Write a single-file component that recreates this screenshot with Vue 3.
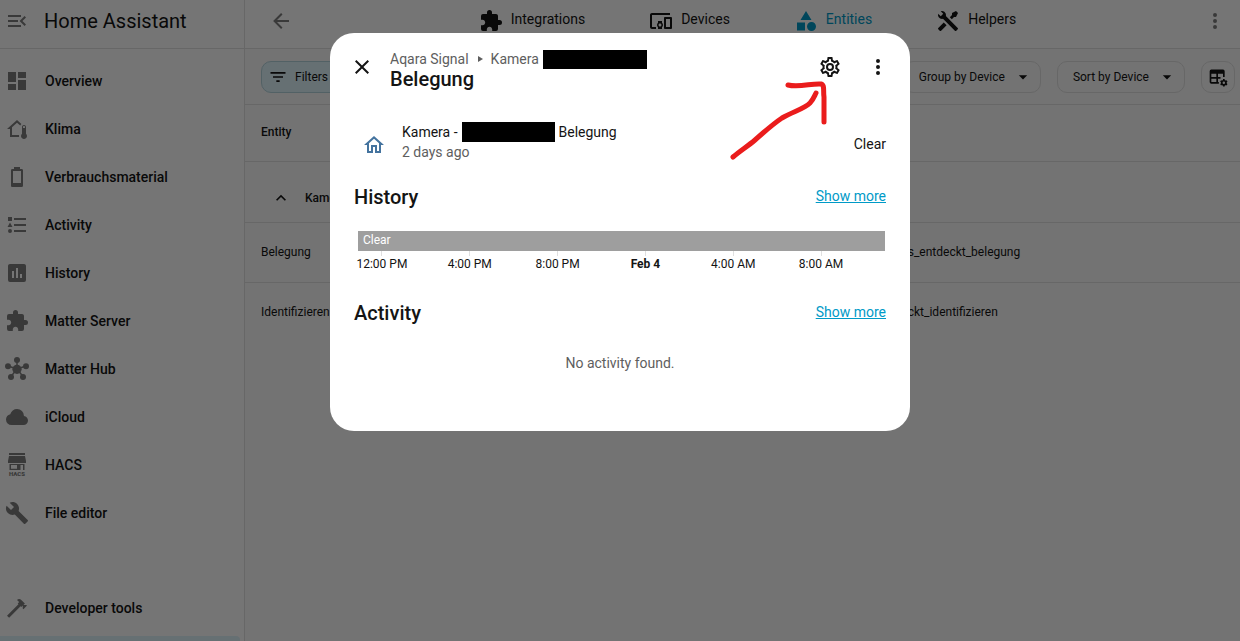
<script setup>
const icons = {
  menu: 'M21,15.61L19.59,17L14.58,12L19.59,7L21,8.39L17.44,12L21,15.61M3,6H16V8H3V6M3,13V11H13V13H3M3,18V16H16V18H3Z',
  dashboard: 'M13,3V9H21V3M13,21H21V11H13M3,21H11V15H3M3,13H11V3H3V13Z',
  climate: 'M19 8C20.11 8 21 8.9 21 10V16.76C21.61 17.31 22 18.11 22 19C22 20.66 20.66 22 19 22C17.34 22 16 20.66 16 19C16 18.11 16.39 17.31 17 16.76V10C17 8.9 17.9 8 19 8M19 9C18.45 9 18 9.45 18 10V11H20V10C20 9.45 19.55 9 19 9M12 5.69L7 10.19V18H14.1L14 19L14.1 20H5V12H2L12 3L16.4 6.96C15.89 7.4 15.5 7.97 15.25 8.61L12 5.69Z',
  battery: 'M16,18H8V6H16M16.67,4H15V2H9V4H7.33A1.33,1.33 0 0,0 6,5.33V20.67C6,21.4 6.6,22 7.33,22H16.67A1.33,1.33 0 0,0 18,20.67V5.33C18,4.6 17.4,4 16.67,4Z',
  list: 'M5,9.5L7.5,14H2.5L5,9.5M3,4H7V8H3V4M5,20A2,2 0 0,0 7,18A2,2 0 0,0 5,16A2,2 0 0,0 3,18A2,2 0 0,0 5,20M9,5V7H21V5H9M9,19H21V17H9V19M9,13H21V11H9V13Z',
  chart: 'M9 17H7V10H9V17M13 17H11V7H13V17M17 17H15V13H17V17M19 3H5C3.89 3 3 3.89 3 5V19A2 2 0 0 0 5 21H19A2 2 0 0 0 21 19V5C21 3.89 20.1 3 19 3Z',
  puzzle: 'M20.5,11H19V7C19,5.89 18.1,5 17,5H13V3.5A2.5,2.5 0 0,0 10.5,1A2.5,2.5 0 0,0 8,3.5V5H4A2,2 0 0,0 2,7V10.8H3.5C5,10.8 6.2,12 6.2,13.5C6.2,15 5,16.2 3.5,16.2H2V20A2,2 0 0,0 4,22H7.8V20.5C7.8,19 9,17.8 10.5,17.8C12,17.8 13.2,19 13.2,20.5V22H17A2,2 0 0,0 19,20V16H20.5A2.5,2.5 0 0,0 23,13.5A2.5,2.5 0 0,0 20.5,11Z',
  cloud: 'M6.5 20Q4.22 20 2.61 18.43 1 16.85 1 14.58 1 12.63 2.17 11.1 3.35 9.57 5.25 9.15 5.88 6.85 7.75 5.43 9.63 4 12 4 14.93 4 16.96 6.04 19 8.07 19 11 20.73 11.2 21.86 12.5 23 13.78 23 15.5 23 17.38 21.69 18.69 20.38 20 18.5 20Z',
  wrench: 'M22.7,19L13.6,9.9C14.5,7.6 14,4.9 12.1,3C10.1,1 7.1,0.6 4.7,1.7L9,6L6,9L1.6,4.7C0.4,7.1 0.9,10.1 2.9,12.1C4.8,14 7.5,14.5 9.8,13.6L18.9,22.7C19.3,23.1 19.9,23.1 20.3,22.7L22.6,20.4C23.1,20 23.1,19.3 22.7,19Z',
  hammer: 'M2,19.63L13.43,8.2L12.72,7.5L14.14,6.07L12,3.89C13.2,2.7 15.09,2.7 16.27,3.89L19.87,7.5L18.45,8.91H21.29L22,9.62L18.45,13.21L17.74,12.5V9.62L16.27,11.04L15.56,10.33L4.13,21.76L2,19.63Z',
  back: 'M20,11V13H8L13.5,18.5L12.08,19.92L4.16,12L12.08,4.08L13.5,5.5L8,11H20Z',
  devices: 'M3 6H21V4H3C1.9 4 1 4.9 1 6V18C1 19.1 1.9 20 3 20H7V18H3V6M13 12H9V13.78C8.39 14.33 8 15.11 8 16C8 16.89 8.39 17.67 9 18.22V20H13V18.22C13.61 17.67 14 16.88 14 16S13.61 14.33 13 13.78V12M11 17.5C10.17 17.5 9.5 16.83 9.5 16S10.17 14.5 11 14.5 12.5 15.17 12.5 16 11.83 17.5 11 17.5M22 8H16C15.5 8 15 8.5 15 9V19C15 19.5 15.5 20 16 20H22C22.5 20 23 19.5 23 19V9C23 8.5 22.5 8 22 8M21 18H17V10H21V18Z',
  shape: 'M11,13.5V21.5H3V13.5H11M12,2L17.5,11H6.5L12,2M17.5,13C20,13 22,15 22,17.5C22,20 20,22 17.5,22C15,22 13,20 13,17.5C13,15 15,13 17.5,13Z',
  tools: 'M21.71 20.29L20.29 21.71A1 1 0 0 1 18.88 21.71L7 9.85A3.81 3.81 0 0 1 6 10A4 4 0 0 1 2.22 4.7L4.76 7.24L5.29 6.71L6.71 5.29L7.24 4.76L4.7 2.22A4 4 0 0 1 10 6A3.81 3.81 0 0 1 9.85 7L21.71 18.88A1 1 0 0 1 21.71 20.29M2.29 18.88A1 1 0 0 0 2.29 20.29L3.71 21.71A1 1 0 0 0 5.12 21.71L10.59 16.25L7.76 13.42M20 2L16 4V6L13.83 8.17L15.83 10.17L18 8H20L22 4Z',
  dots: 'M12,16A2,2 0 0,1 14,18A2,2 0 0,1 12,20A2,2 0 0,1 10,18A2,2 0 0,1 12,16M12,10A2,2 0 0,1 14,12A2,2 0 0,1 12,14A2,2 0 0,1 10,12A2,2 0 0,1 12,10M12,4A2,2 0 0,1 14,6A2,2 0 0,1 12,8A2,2 0 0,1 10,6A2,2 0 0,1 12,4Z',
  filter: 'M6,13H18V11H6M3,6V8H21V6M10,18H14V16H10V18Z',
  down: 'M7,10L12,15L17,10H7Z',
  up: 'M7.41,15.41L12,10.83L16.59,15.41L18,14L12,8L6,14L7.41,15.41Z',
  close: 'M19,6.41L17.59,5L12,10.59L6.41,5L5,6.41L10.59,12L5,17.59L6.41,19L12,13.41L17.59,19L19,17.59L13.41,12L19,6.41Z',
  cog: 'M12,8A4,4 0 0,1 16,12A4,4 0 0,1 12,16A4,4 0 0,1 8,12A4,4 0 0,1 12,8M12,10A2,2 0 0,0 10,12A2,2 0 0,0 12,14A2,2 0 0,0 14,12A2,2 0 0,0 12,10M10,22C9.75,22 9.54,21.82 9.5,21.58L9.13,18.93C8.5,18.68 7.96,18.34 7.44,17.94L4.95,18.95C4.73,19.03 4.46,18.95 4.34,18.73L2.34,15.27C2.21,15.05 2.27,14.78 2.46,14.63L4.57,12.97L4.5,12L4.57,11L2.46,9.37C2.27,9.22 2.21,8.95 2.34,8.73L4.34,5.27C4.46,5.05 4.73,4.96 4.95,5.05L7.44,6.05C7.96,5.66 8.5,5.32 9.13,5.07L9.5,2.42C9.54,2.18 9.75,2 10,2H14C14.25,2 14.46,2.18 14.5,2.42L14.87,5.07C15.5,5.32 16.04,5.66 16.56,6.05L19.05,5.05C19.27,4.96 19.54,5.05 19.66,5.27L21.66,8.73C21.79,8.95 21.73,9.22 21.54,9.37L19.43,11L19.5,12L19.43,13L21.54,14.63C21.73,14.78 21.79,15.05 21.66,15.27L19.66,18.73C19.54,18.95 19.27,19.04 19.05,18.95L16.56,17.95C16.04,18.34 15.5,18.68 14.87,18.93L14.5,21.58C14.46,21.82 14.25,22 14,22H10M11.25,4L10.88,6.61C9.68,6.86 8.62,7.5 7.85,8.39L5.44,7.35L4.69,8.65L6.8,10.2C6.4,11.37 6.4,12.64 6.8,13.8L4.68,15.36L5.43,16.66L7.86,15.62C8.63,16.5 9.68,17.14 10.87,17.38L11.24,20H12.76L13.13,17.39C14.32,17.14 15.37,16.5 16.14,15.62L18.57,16.66L19.32,15.36L17.2,13.81C17.6,12.64 17.6,11.37 17.2,10.2L19.31,8.65L18.56,7.35L16.15,8.39C15.38,7.5 14.32,6.86 13.12,6.62L12.75,4H11.25Z',
  home: 'M12 5.69L17 10.19V18H15V12H9V18H7V10.19L12 5.69M12 3L2 12H5V20H11V14H13V20H19V12H22Z',
}

const nav = [
  { label: 'Overview', icon: 'dashboard' },
  { label: 'Klima', icon: 'climate' },
  { label: 'Verbrauchsmaterial', icon: 'battery' },
  { label: 'Activity', icon: 'list' },
  { label: 'History', icon: 'chart' },
  { label: 'Matter Server', icon: 'puzzle' },
  { label: 'Matter Hub', icon: 'hub' },
  { label: 'iCloud', icon: 'cloud' },
  { label: 'HACS', icon: 'hacs' },
  { label: 'File editor', icon: 'wrench' },
]

const tabs = [
  { label: 'Integrations', icon: 'puzzle' },
  { label: 'Devices', icon: 'devices' },
  { label: 'Entities', icon: 'shape', active: true },
  { label: 'Helpers', icon: 'tools' },
]

const rows = [
  { name: 'Belegung', id: 's_entdeckt_belegung' },
  { name: 'Identifizieren', id: 'ckt_identifizieren' },
]

const ticks = ['12:00 PM', '4:00 PM', '8:00 PM', 'Feb 4', '4:00 AM', '8:00 AM']
</script>

<template>
  <div class="app">
    <aside class="sidebar">
      <div class="brand">
        <button class="plain muted" aria-label="Toggle sidebar">
          <svg class="icon" viewBox="0 0 24 24"><path :d="icons.menu" /></svg>
        </button>
        <span class="brand-name">Home Assistant</span>
      </div>
      <nav class="nav">
        <a v-for="item in nav" :key="item.label" class="nav-item" href="#">
          <svg v-if="item.icon === 'hub'" class="icon" viewBox="0 0 24 24">
            <path class="spokes" d="M12 12V3M12 12L3 9M12 12L21 9M12 12L6 19.5M12 12L18 19.5" />
            <circle cx="12" cy="12.3" r="4.6" />
            <circle cx="12" cy="3" r="3" />
            <circle cx="3" cy="9.3" r="3" />
            <circle cx="21" cy="9.3" r="3" />
            <circle cx="6" cy="20" r="3" />
            <circle cx="18" cy="20" r="3" />
          </svg>
          <svg v-else-if="item.icon === 'hacs'" class="icon" viewBox="0 0 24 24">
            <path fill-rule="evenodd" d="M4 0H20V2H4ZM4 3H20L21 8V10H3V8ZM4.500 11H19.500V17H18V12H15.500V17H4.500ZM6 12V15.800H12V12Z" />
            <text class="hacs-text" x="12" y="23" text-anchor="middle">HACS</text>
          </svg>
          <svg v-else class="icon" viewBox="0 0 24 24">
            <path fill-rule="evenodd" :d="icons[item.icon]" />
          </svg>
          <span>{{ item.label }}</span>
        </a>
      </nav>
      <nav class="nav nav-bottom">
        <a class="nav-item" href="#">
          <svg class="icon" viewBox="0 0 24 24"><path :d="icons.hammer" /></svg>
          <span>Developer tools</span>
        </a>
        <a class="nav-item selected" href="#" aria-label="Settings"></a>
      </nav>
    </aside>

    <main class="main">
      <header class="topbar">
        <button class="plain muted edge-left" aria-label="Back">
          <svg class="icon" viewBox="0 0 24 24"><path :d="icons.back" /></svg>
        </button>
        <nav class="tabs">
          <a v-for="tab in tabs" :key="tab.label" class="tab" :class="{ active: tab.active }" href="#">
            <svg class="icon" viewBox="0 0 24 24"><path fill-rule="evenodd" :d="icons[tab.icon]" /></svg>
            <span>{{ tab.label }}</span>
          </a>
        </nav>
        <button class="plain muted edge-right" aria-label="More">
          <svg class="icon" viewBox="0 0 24 24"><path :d="icons.dots" /></svg>
        </button>
      </header>

      <div class="toolbar">
        <button class="chip filters">
          <svg class="icon small" viewBox="0 0 24 24"><path :d="icons.filter" /></svg>
          <span>Filters</span>
        </button>
        <span class="spacer"></span>
        <button class="chip drop">
          <span>Group by Device</span>
          <svg class="icon small" viewBox="0 0 24 24"><path :d="icons.down" /></svg>
        </button>
        <button class="chip drop">
          <span>Sort by Device</span>
          <svg class="icon small" viewBox="0 0 24 24"><path :d="icons.down" /></svg>
        </button>
        <button class="chip square" aria-label="Customize table">
          <svg class="icon small" viewBox="0 0 24 24">
            <path fill-rule="evenodd" d="M4 3H18A2 2 0 0 1 20 5V12H18V8H12V12H15V14H12V18H13V20H4A2 2 0 0 1 2 18V5A2 2 0 0 1 4 3ZM4 8V12H10V8ZM4 14V18H10V14Z" />
            <circle class="gear-ring" cx="19" cy="19" r="2.500" />
            <path class="gear-teeth" d="M19 14.500V16.500M19 21.500V23.500M15.100 16.800L16.800 17.800M21.200 20.200L22.900 21.200M15.100 21.200L16.800 20.200M21.200 17.800L22.900 16.800" />
          </svg>
        </button>
      </div>

      <table class="table">
        <thead>
          <tr>
            <th scope="col">Entity</th>
            <th scope="col"></th>
          </tr>
        </thead>
        <tbody>
          <tr class="group">
            <td colspan="2">
              <button class="plain group-toggle">
                <svg class="icon small" viewBox="0 0 24 24"><path :d="icons.up" /></svg>
                <span>Kamera</span>
              </button>
            </td>
          </tr>
          <tr v-for="row in rows" :key="row.name">
            <td>{{ row.name }}</td>
            <td>{{ row.id }}</td>
          </tr>
        </tbody>
      </table>
    </main>

    <div class="scrim">
      <section class="dialog" role="dialog" aria-labelledby="dialog-title">
        <header class="dialog-head">
          <button class="plain head-button" aria-label="Close">
            <svg class="icon" viewBox="0 0 24 24"><path :d="icons.close" /></svg>
          </button>
          <div class="titles">
            <div class="crumbs">
              <span>Aqara Signal</span>
              <svg class="crumb-arrow" viewBox="0 0 6 6"><path d="M1 0L6 3L1 6Z" /></svg>
              <span>Kamera</span>
              <span class="redacted"></span>
            </div>
            <h1 id="dialog-title">Belegung</h1>
          </div>
          <button class="plain head-button" aria-label="Settings">
            <svg class="icon" viewBox="0 0 24 24"><path fill-rule="evenodd" :d="icons.cog" /></svg>
          </button>
          <button class="plain head-button" aria-label="More options">
            <svg class="icon" viewBox="0 0 24 24"><path :d="icons.dots" /></svg>
          </button>
        </header>

        <div class="body">
          <div class="state">
            <span class="state-icon">
              <svg class="icon" viewBox="0 0 24 24"><path fill-rule="evenodd" :d="icons.home" /></svg>
            </span>
            <div class="state-info">
              <div class="state-name">
                <span>Kamera -</span>
                <span class="redacted short"></span>
                <span>Belegung</span>
              </div>
              <div class="secondary">2 days ago</div>
            </div>
            <span class="state-value">Clear</span>
          </div>

          <div class="section-head">
            <h2>History</h2>
            <a href="#">Show more</a>
          </div>
          <div class="timeline">
            <div class="bar">Clear</div>
            <div class="axis">
              <span v-for="tick in ticks" :key="tick" class="tick" :class="{ day: tick === 'Feb 4' }">{{ tick }}</span>
            </div>
          </div>

          <div class="section-head activity">
            <h2>Activity</h2>
            <a href="#">Show more</a>
          </div>
          <p class="empty">No activity found.</p>
        </div>

        <svg class="pointer" viewBox="0 0 100 82" aria-hidden="true">
          <path d="M5 78C12 72 20 67 27 61C36 53 45 45 54 39C66 32 76 30 82 24C85 21 86 18 88 14" />
          <path d="M60 6C71 9 84 4 93 5C97 6 95 12 96 18V43" />
        </svg>
      </section>
    </div>
  </div>
</template>

<style>
body {
  margin: 0;
}
</style>

<style scoped>
.app {
  display: flex;
  height: 100vh;
  overflow: hidden;
  background: #fafafa;
  color: #141414;
  font-family: Roboto, "Noto Sans", sans-serif;
  font-size: 14px;
  line-height: 20px;
}
* {
  box-sizing: border-box;
}
a {
  color: inherit;
  text-decoration: none;
}
button {
  font: inherit;
  color: inherit;
  cursor: pointer;
}
.plain {
  display: flex;
  align-items: center;
  justify-content: center;
  padding: 0;
  border: 0;
  background: none;
}
.icon {
  display: block;
  flex: none;
  width: 24px;
  height: 24px;
  fill: currentColor;
}
.small {
  width: 20px;
  height: 20px;
}
.muted {
  color: #7d7d7d;
}
.sidebar {
  display: flex;
  flex: none;
  flex-direction: column;
  width: 245px;
  border-right: 1px solid #e0e0e0;
  background: #fff;
}
.brand {
  display: flex;
  flex: none;
  align-items: center;
  gap: 15px;
  height: 49px;
  padding: 0 5px 6px;
  border-bottom: 1px solid #e0e0e0;
}
.brand-name {
  font-size: 20px;
}
.nav {
  padding-top: 8px;
}
.nav-item {
  display: flex;
  align-items: center;
  gap: 16px;
  height: 48px;
  padding-left: 5px;
  font-weight: 500;
}
.nav-item .icon {
  color: #7d7d7d;
}
.nav-bottom {
  height: 57px;
  margin-top: auto;
  padding: 0;
}
.selected {
  margin: 4px 4px 0 0;
  border-radius: 0 4px 0 0;
  background: #dff3fa;
}
.spokes {
  fill: none;
  stroke: currentColor;
  stroke-width: 1.500;
}
.hacs-text {
  font-size: 6px;
  font-weight: 900;
}
.main {
  flex: 1;
  min-width: 0;
}
.topbar {
  display: flex;
  align-items: center;
  height: 49px;
  padding-bottom: 8px;
  border-bottom: 1px solid #e0e0e0;
  background: #fff;
}
.edge-left {
  width: 60px;
  padding: 2px 0 0 12px;
}
.edge-right {
  width: 50px;
  padding-top: 2px;
}
.tabs {
  display: flex;
  flex: 1;
  justify-content: center;
  gap: 64px;
}
.tab {
  display: flex;
  align-items: flex-start;
  gap: 8px;
  height: 22px;
}
.tab.active {
  color: #009ac7;
}
.toolbar {
  display: flex;
  align-items: center;
  gap: 16px;
  height: 56px;
  padding: 0 5px 0 16px;
  border-bottom: 1px solid #e0e0e0;
  background: #fafafa;
}
.spacer {
  flex: 1;
}
.chip {
  display: flex;
  align-items: center;
  gap: 8px;
  height: 32px;
  border: 1px solid #e0e0e0;
  border-radius: 10px;
  background: none;
  font-size: 12px;
}
.filters {
  gap: 7px;
  padding: 0 16px 0 6px;
  border-color: #b4d4dd;
  background: #dff3fa;
}
.drop {
  padding: 0 7px 0 15px;
}
.square {
  justify-content: center;
  width: 34px;
  padding: 0;
}
.gear-ring,
.gear-teeth {
  fill: none;
  stroke: currentColor;
  stroke-width: 2;
}
.table {
  width: 100%;
  border-collapse: collapse;
  table-layout: fixed;
  font-size: 12px;
}
.table th,
.table td {
  height: 60px;
  padding: 0 16px;
  text-align: left;
  border-bottom: 1px solid #e0e0e0;
}
.table th {
  height: 56px;
  padding-bottom: 2px;
  font-weight: 500;
}
.table th:first-child {
  width: 65%;
}
.table .group td {
  height: 61px;
  padding-top: 12px;
}
.group-toggle {
  gap: 14px;
  padding-left: 10px;
  font-weight: 500;
}
.table tbody tr:last-child td {
  border-bottom: 0;
}
.scrim {
  position: fixed;
  inset: 0;
  display: flex;
  align-items: flex-start;
  justify-content: center;
  padding: 33px 16px;
  background: rgba(0, 0, 0, 0.54);
}
.dialog {
  position: relative;
  width: 100%;
  max-width: 580px;
  padding-bottom: 58px;
  border-radius: 24px;
  background: #fff;
}
.dialog-head {
  display: flex;
  align-items: flex-start;
  padding: 10px 8px 0;
}
.head-button {
  width: 48px;
  height: 48px;
}
.titles {
  flex: 1;
  min-width: 0;
  padding: 6px 4px 0;
}
.crumbs {
  display: flex;
  align-items: center;
  color: #5e5e5e;
}
.crumb-arrow {
  width: 6px;
  height: 6px;
  margin: 0 8px;
  fill: currentColor;
}
.redacted {
  width: 104px;
  height: 19px;
  margin-left: 4px;
  background: #000;
}
.redacted.short {
  width: 93px;
  height: 20px;
  margin: 0 4px;
}
h1,
h2 {
  margin: 0;
  font-size: 20px;
  font-weight: 500;
}
h1 {
  line-height: 20px;
}
h2 {
  line-height: 28px;
}
.body {
  padding: 31px 24px 0;
}
.state {
  display: flex;
  align-items: center;
  height: 46px;
}
.state-icon {
  width: 48px;
  padding-left: 8px;
  color: #44739e;
}
.state-info {
  flex: 1;
  align-self: flex-start;
}
.state-name {
  display: flex;
  align-items: center;
}
.state-value {
  padding-bottom: 2px;
}
.secondary {
  color: #5e5e5e;
}
.section-head {
  display: flex;
  align-items: center;
  justify-content: space-between;
  margin-top: 15px;
}
.section-head a {
  padding-bottom: 2px;
  color: #009ac7;
  text-decoration: underline;
}
.timeline {
  margin: 20px 1px 0 4px;
}
.bar {
  height: 20px;
  padding-left: 5px;
  background: #9e9e9e;
  color: #fff;
  font-size: 12px;
  line-height: 18px;
}
.axis {
  display: grid;
  grid-template-columns: repeat(6, 1fr);
  margin: 0 20px 0 -20px;
  font-size: 12px;
  line-height: 16px;
}
.tick {
  text-align: center;
}
.tick::before {
  content: "";
  display: block;
  width: 1px;
  height: 5px;
  margin: 0 auto;
  background: #e0e0e0;
}
.day {
  font-weight: 700;
}
.activity {
  margin-top: 27px;
}
.empty {
  margin: 26px 0 0;
  color: #5e5e5e;
  text-align: center;
}
.pointer {
  position: absolute;
  top: 46px;
  right: 82px;
  width: 100px;
  height: 82px;
  fill: none;
  stroke: #ea1c1c;
  stroke-width: 5;
  stroke-linecap: round;
  stroke-linejoin: round;
}
</style>
